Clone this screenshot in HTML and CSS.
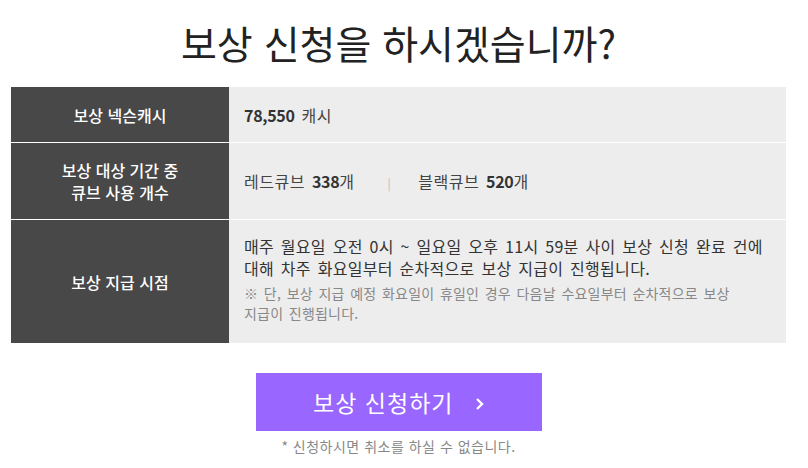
FILE: index.html
```html
<!DOCTYPE html>
<html lang="ko">
<head>
    <meta charset="UTF-8">
    <meta name="viewport" content="width=device-width, initial-scale=1.0">
    <title>보상 신청</title>
    <link rel="stylesheet" href="styles.css">
</head>
<body>
    <div class="container">
        <h1 class="title">보상 신청을 하시겠습니까?</h1>

        <table class="info">
            <tr class="row-cash">
                <th>보상 넥슨캐시</th>
                <td><b class="num">78,550</b> 캐시</td>
            </tr>
            <tr class="row-cube">
                <th>보상 대상 기간 중<br>큐브 사용 개수</th>
                <td>
                    레드큐브 <b class="num">338</b>개
                    <span class="sep">|</span>
                    블랙큐브 <b class="num">520</b>개
                </td>
            </tr>
            <tr class="row-date">
                <th>보상 지급 시점</th>
                <td>
                    <p class="desc">매주 월요일 오전 0시 ~ 일요일 오후 11시 59분 사이 보상 신청 완료 건에 대해 차주 화요일부터 순차적으로 보상 지급이 진행됩니다.</p>
                    <p class="note">※ 단, 보상 지급 예정 화요일이 휴일인 경우 다음날 수요일부터 순차적으로 보상 지급이 진행됩니다.</p>
                </td>
            </tr>
        </table>

        <div class="actions">
            <button class="apply">보상 신청하기
                <svg class="arrow" width="9" height="14" viewBox="0 0 9 14"><path d="M2 2l5 5-5 5" fill="none" stroke="#fff" stroke-width="2.4"/></svg>
            </button>
            <p class="warn">* 신청하시면 취소를 하실 수 없습니다.</p>
        </div>
    </div>
</body>
</html>
```

FILE: styles.css
```css
body {
    margin: 0;
    font-family: "Noto Sans CJK KR", "Noto Sans", sans-serif;
    color: #333;
    background: #fff;
}
.container {
    width: 775px;
    margin-left: 11px;
}
.title {
    margin: 0;
    padding-top: 16px;
    height: 87px;
    box-sizing: border-box;
    text-align: center;
    font-size: 39px;
    font-weight: 400;
    line-height: 52px;
    color: #222;
}
.info {
    width: 100%;
    border-collapse: collapse;
    word-break: keep-all;
}
.info th,
.info td {
    padding: 0 15px;
    border-bottom: 1px solid #fff;
}
.info tr:last-child th,
.info tr:last-child td {
    border-bottom: none;
}
.info th {
    width: 188px;
    background-color: #484848;
    color: #fff;
    font-size: 16px;
    font-weight: 500;
    line-height: 22px;
    text-align: center;
}
.info td {
    background-color: #ededed;
    font-size: 16px;
    color: #444;
    letter-spacing: 0.5px;
    word-spacing: 2px;
}
.row-cash th, .row-cash td { height: 55px; }
.row-cube th, .row-cube td { height: 76px; }
.row-date th, .row-date td { height: 123px; }
.row-date td { height: 117px; padding-bottom: 6px; }
.num {
    font-weight: 700;
    color: #333;
    letter-spacing: -0.3px;
}
.sep {
    color: #bbb;
    font-size: 12px;
    margin: 0 20px 0 26px;
}
.desc {
    margin: 0;
    font-size: 16px;
    line-height: 22px;
    color: #333;
    letter-spacing: 0.3px;
}
.note {
    margin: 4px 0 0;
    font-size: 14px;
    line-height: 20px;
    color: #888;
    letter-spacing: 0.2px;
    word-spacing: 1.5px;
}
.actions {
    padding-top: 30px;
    text-align: center;
}
.apply {
    width: 286px;
    height: 58px;
    border: none;
    background-color: #9966ff;
    color: #fff;
    font-family: inherit;
    font-size: 23px;
    letter-spacing: 1px;
    cursor: pointer;
}
.arrow {
    margin-left: 14px;
    vertical-align: 1px;
}
.warn {
    margin: 5px 0 0;
    font-size: 14px;
    color: #888;
    letter-spacing: 0.5px;
}
```
